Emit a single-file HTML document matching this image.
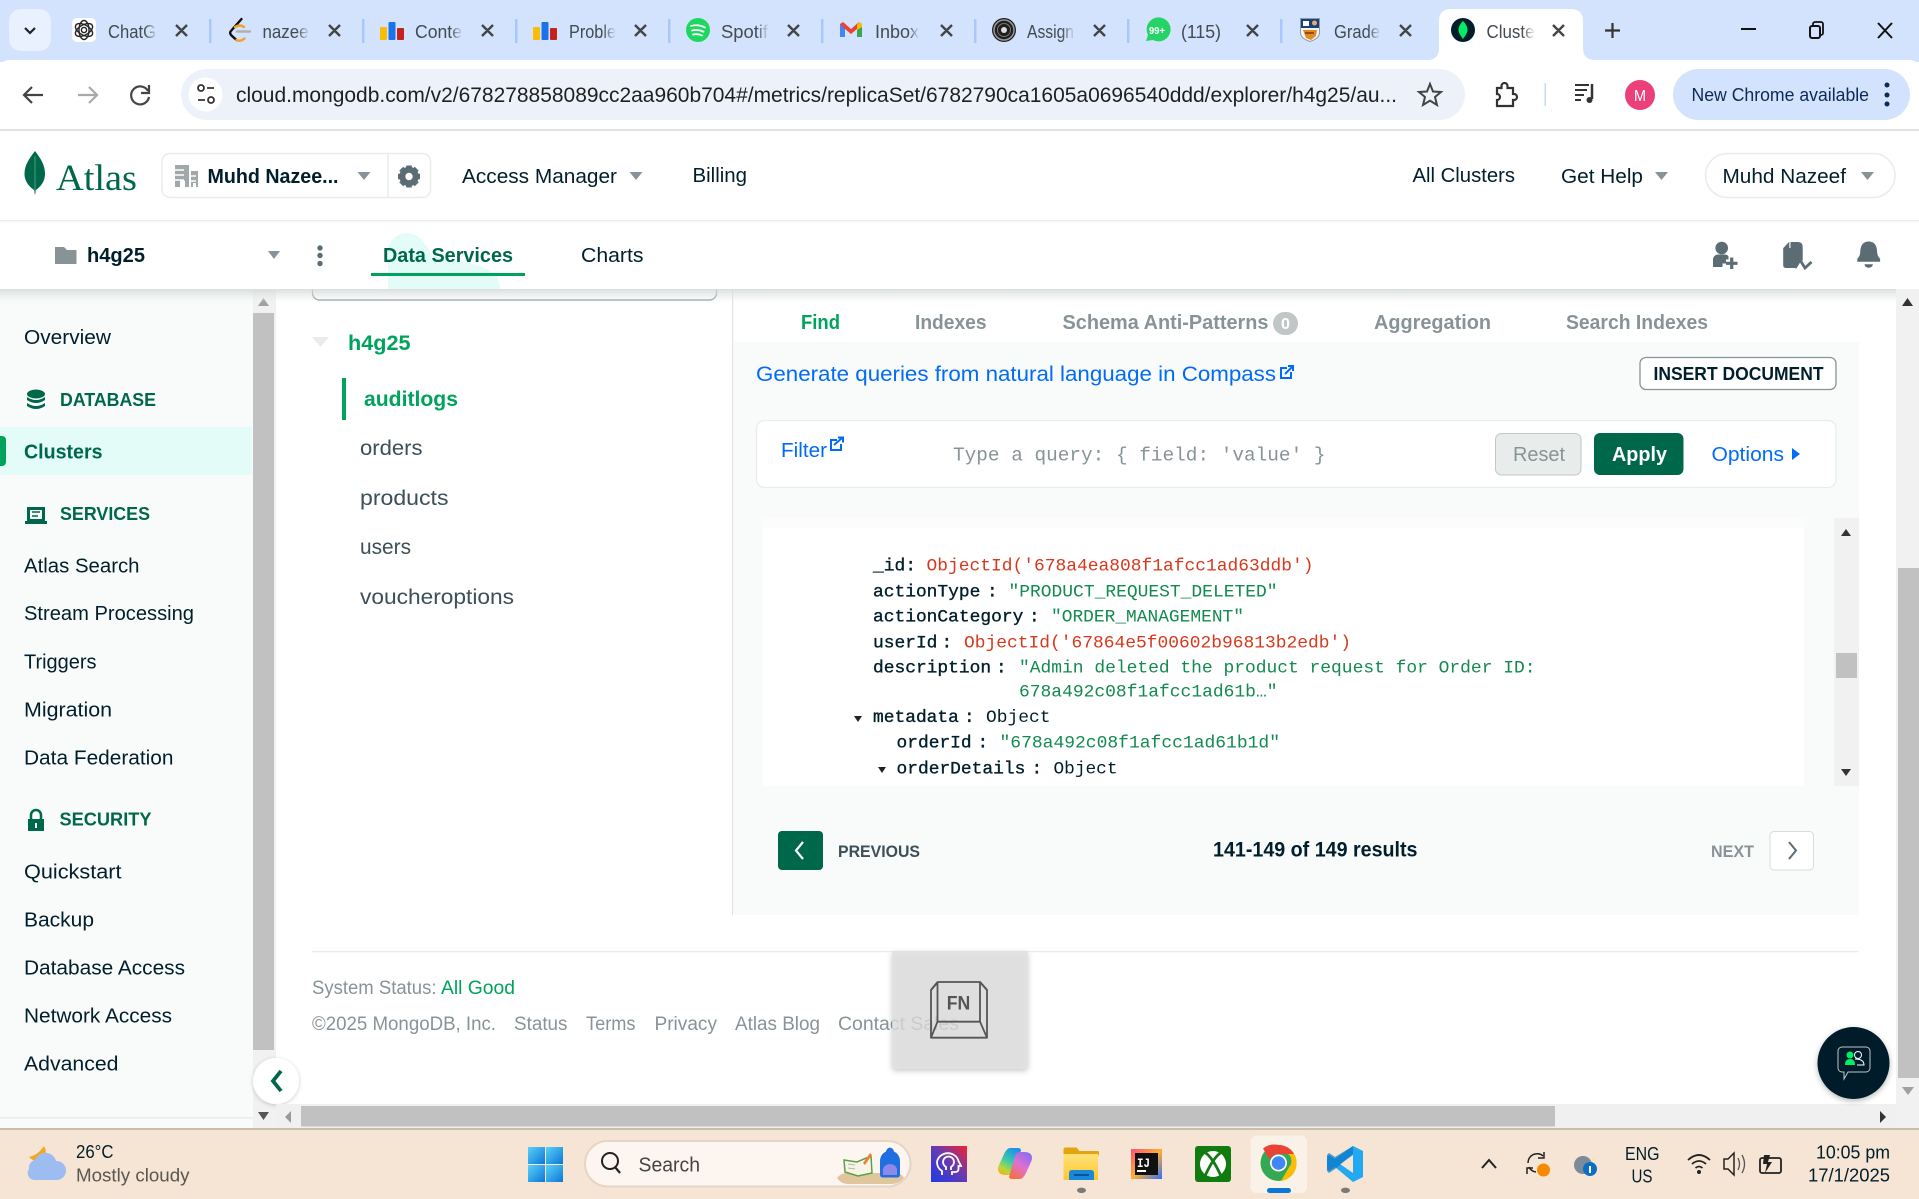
<!DOCTYPE html>
<html lang="en"><head><meta charset="utf-8"><title>Clusters | Cloud: MongoDB Cloud</title>
<style>
html,body{margin:0;padding:0;width:1919px;height:1199px;overflow:hidden;background:#fff}
svg{display:block}
text{font-family:"Liberation Sans",sans-serif;font-size:20px;fill:#001e2b;white-space:pre}
.tab{font-size:18px;fill:#444a50}
.b{font-weight:700}
.gr{fill:#889397}
.dg{fill:#00684a}
.lg{fill:#00a35c}
.bl{fill:#016bf8}
.sl{fill:#3d4f58}
.m{font-family:"Liberation Mono",monospace;font-size:17.9px}
.k{stroke:#001e2b;stroke-width:.35}
.r{fill:#d8381c}
.g{fill:#128a50}
</style></head><body>
<svg xmlns="http://www.w3.org/2000/svg" width="1919" height="1199" viewBox="0 0 1919 1199">
<defs>
<linearGradient id="fade"><stop offset="0" stop-color="#d3e3fd" stop-opacity="0"/><stop offset="1" stop-color="#d3e3fd"/></linearGradient>
<linearGradient id="fadew"><stop offset="0" stop-color="#fff" stop-opacity="0"/><stop offset="1" stop-color="#fff"/></linearGradient>
<linearGradient id="sh" x1="0" y1="0" x2="0" y2="1"><stop offset="0" stop-color="#d6dada" stop-opacity=".9"/><stop offset="1" stop-color="#e8edeb" stop-opacity="0"/></linearGradient>
<linearGradient id="pur" x1="0" y1="1" x2="1" y2="0"><stop offset="0" stop-color="#1c3be8"/><stop offset=".55" stop-color="#6a3ab0"/><stop offset="1" stop-color="#f8202c"/></linearGradient>
<linearGradient id="ij" x1="0" y1="0" x2="1" y2="1"><stop offset="0" stop-color="#ff4f7b"/><stop offset=".5" stop-color="#ffb02e"/><stop offset="1" stop-color="#2f6fff"/></linearGradient>
<linearGradient id="copl" x1=".7" y1="0" x2=".2" y2="1"><stop offset="0" stop-color="#1e8fe8"/><stop offset=".45" stop-color="#35c8b0"/><stop offset=".8" stop-color="#b8d838"/><stop offset="1" stop-color="#f0b020"/></linearGradient>
<linearGradient id="copr" x1=".8" y1="0" x2=".2" y2="1"><stop offset="0" stop-color="#8a6cf0"/><stop offset=".5" stop-color="#e070d0"/><stop offset="1" stop-color="#f5703a"/></linearGradient>
<linearGradient id="win" x1="0" y1="0" x2="1" y2="1"><stop offset="0" stop-color="#5cd0f8"/><stop offset="1" stop-color="#0a78d6"/></linearGradient>
<linearGradient id="fold" x1="0" y1="0" x2="0" y2="1"><stop offset="0" stop-color="#ffe27a"/><stop offset="1" stop-color="#fcc72e"/></linearGradient>
<filter id="ds" x="-30%" y="-30%" width="160%" height="160%"><feDropShadow dx="0" dy="2" stdDeviation="3" flood-color="#000" flood-opacity=".28"/></filter>
<filter id="ds2" x="-30%" y="-30%" width="160%" height="160%"><feDropShadow dx="0" dy="1" stdDeviation="2" flood-color="#000" flood-opacity=".2"/></filter>
</defs>

<!-- tab strip -->
<rect width="1919" height="62" fill="#d3e3fd"/>
<rect x="9" y="9" width="42" height="42" rx="12" fill="#e9f0fe"/>
<path d="M25 28l5 5 5-5" fill="none" stroke="#222" stroke-width="2.200"/>
<g fill="#a8c7fa"><rect x="209" y="19" width="2.500" height="24"/><rect x="362" y="19" width="2.500" height="24"/><rect x="515" y="19" width="2.500" height="24"/><rect x="668" y="19" width="2.500" height="24"/><rect x="821" y="19" width="2.500" height="24"/><rect x="974" y="19" width="2.500" height="24"/><rect x="1127" y="19" width="2.500" height="24"/><rect x="1280" y="19" width="2.500" height="24"/></g>
<path d="M1427 60Q1439 60 1439 48V21Q1439 9 1451 9H1571Q1583 9 1583 21V48Q1583 60 1595 60Z" fill="#fff"/>

<!-- favicons -->
<rect x="72" y="18" width="24" height="24" rx="5" fill="#fff"/>
<g fill="none" stroke="#222" stroke-width="1.400"><ellipse cx="84" cy="30" rx="9.500" ry="5" transform="rotate(30 84 30)"/><ellipse cx="84" cy="30" rx="9.500" ry="5" transform="rotate(90 84 30)"/><ellipse cx="84" cy="30" rx="9.500" ry="5" transform="rotate(150 84 30)"/><circle cx="84" cy="30" r="2.600"/></g>
<path d="M241.500 19L230.500 31.500q-1 2 1 4l5 4.500" fill="none" stroke="#111" stroke-width="2.400" stroke-linecap="round"/><path d="M236.500 40q4 2 8-1.500M235 27q5-3 9 0" fill="none" stroke="#f89f1b" stroke-width="2.400" stroke-linecap="round"/><path d="M237 31.500h13" stroke="#b0b0b0" stroke-width="2.400" stroke-linecap="round"/>
<g><rect x="380" y="27" width="7" height="13" rx="1" fill="#fbbc04"/><rect x="388.500" y="22" width="7" height="18" rx="1" fill="#1a73e8"/><rect x="397" y="28" width="7" height="12" rx="1" fill="#c5221f"/></g>
<g transform="translate(153 0)"><rect x="380" y="27" width="7" height="13" rx="1" fill="#fbbc04"/><rect x="388.500" y="22" width="7" height="18" rx="1" fill="#1a73e8"/><rect x="397" y="28" width="7" height="12" rx="1" fill="#c5221f"/></g>
<circle cx="698" cy="30" r="12" fill="#1ed760"/><path d="M691 26q7-2 14 1.500M692 30.500q6-1.500 11.500 1.200M693 34.500q5-1 9 1" fill="none" stroke="#fff" stroke-width="1.800" stroke-linecap="round"/>
<path d="M840 24v13h5V29l6 5 6-5v8h5V24l-3-2-8 7-8-7z" fill="#ea4335"/><path d="M840 24v13h5V29z" fill="#4285f4"/><path d="M857 29v8h5V24z" fill="#34a853"/><path d="M859 22l3 2v3l-5 3v-5z" fill="#fbbc04"/>
<circle cx="1004" cy="30" r="12" fill="#1f1f1f"/><circle cx="1004" cy="30" r="10" fill="none" stroke="#999" stroke-width="1.500"/><circle cx="1004" cy="30" r="6.500" fill="none" stroke="#777" stroke-width="1"/><circle cx="1004" cy="30" r="3" fill="#ddd"/>
<path d="M1146 41l2-6a12 12 0 1 1 5 5z" fill="#25d366"/><text x="1149" y="34" class="b" style="font-size:10px;fill:#fff" textLength="16" lengthAdjust="spacingAndGlyphs">99+</text>
<path d="M1300.500 18.500h19v14q0 6-9.500 9-9.500-3-9.500-9z" fill="#f6f6f6" stroke="#8a9bb0"/><rect x="1301" y="19" width="18" height="9" fill="#1c3f7a"/><rect x="1303" y="21" width="6" height="5" fill="#fff"/><circle cx="1314.500" cy="23" r="2.500" fill="#d9b070"/><path d="M1303 30h14l-1 6-5 4-5-2z" fill="#e08a20"/><path d="M1305 33h9" stroke="#7a3a10" stroke-width="1.500"/>
<circle cx="1463" cy="30" r="12" fill="#001e2b"/><path d="M1463 21c-3 3-4.500 6-4.500 9s2.500 6 4.500 9c2-3 4.500-6 4.500-9s-1.500-6-4.500-9z" fill="#00ed64"/>

<!-- tab titles -->
<text class="tab" x="108" y="38" textLength="48" lengthAdjust="spacingAndGlyphs">ChatG</text>
<text class="tab" x="262.500" y="38" textLength="46" lengthAdjust="spacingAndGlyphs">nazee</text>
<text class="tab" x="415" y="38" textLength="47" lengthAdjust="spacingAndGlyphs">Conte</text>
<text class="tab" x="569" y="38" textLength="47" lengthAdjust="spacingAndGlyphs">Proble</text>
<text class="tab" x="721" y="38" textLength="47" lengthAdjust="spacingAndGlyphs">Spotif</text>
<text class="tab" x="875" y="38" textLength="44" lengthAdjust="spacingAndGlyphs">Inbox</text>
<text class="tab" x="1027" y="38" textLength="47" lengthAdjust="spacingAndGlyphs">Assign</text>
<text class="tab" x="1181" y="38" textLength="40" lengthAdjust="spacingAndGlyphs">(115)</text>
<text class="tab" x="1334" y="38" textLength="46" lengthAdjust="spacingAndGlyphs">Grade</text>
<text class="tab" x="1486.500" y="38" textLength="48" lengthAdjust="spacingAndGlyphs">Cluste</text>
<g fill="url(#fade)"><rect x="144" y="18" width="14" height="26"/><rect x="297" y="18" width="13" height="26"/><rect x="450" y="18" width="13" height="26"/><rect x="603" y="18" width="13" height="26"/><rect x="756" y="18" width="13" height="26"/><rect x="909" y="18" width="10" height="26"/><rect x="1062" y="18" width="13" height="26"/><rect x="1368" y="18" width="13" height="26"/></g>
<rect x="1522" y="18" width="13" height="26" fill="url(#fadew)"/>
<path fill="none" stroke="#444" stroke-width="2.400" d="M176 25l11 11M187 25l-11 11M329 25l11 11M340 25l-11 11M482 25l11 11M493 25l-11 11M635 25l11 11M646 25l-11 11M788 25l11 11M799 25l-11 11M941 25l11 11M952 25l-11 11M1094 25l11 11M1105 25l-11 11M1247 25l11 11M1258 25l-11 11M1400 25l11 11M1411 25l-11 11M1553 25l11 11M1564 25l-11 11"/>
<path d="M1612.500 23v15M1605 30.500h15" stroke="#333" stroke-width="2.200"/>
<path d="M1741 29h15" stroke="#111" stroke-width="2"/>
<rect x="1810" y="26" width="10" height="12" rx="2" fill="none" stroke="#111" stroke-width="2"/><path d="M1813 26v-2a2 2 0 0 1 2-2h6a2 2 0 0 1 2 2v9a2 2 0 0 1-2 2" fill="none" stroke="#111" stroke-width="1.800"/>
<path d="M1878 23l14 15M1892 23l-14 15" stroke="#111" stroke-width="2"/>

<!-- toolbar -->
<path d="M0 129V70Q0 60 10 60H1909Q1919 60 1919 70V129Z" fill="#fff"/>
<rect y="129" width="1919" height="2" fill="#e3e3e3"/>
<path d="M43 95H25M32 87l-8 8 8 8" fill="none" stroke="#444" stroke-width="2.200"/>
<path d="M78 95h18M89 87l8 8-8 8" fill="none" stroke="#a9a9a9" stroke-width="2.200"/>
<path d="M148 91a9 9 0 1 0 1 6" fill="none" stroke="#444" stroke-width="2.200"/><path d="M149 85v8h-8" fill="none" stroke="#444" stroke-width="2.200"/>
<rect x="181" y="69" width="1284" height="51" rx="25.500" fill="#edf2fa"/>
<circle cx="205.500" cy="94.500" r="17" fill="#fff"/>
<circle cx="201" cy="88" r="3" fill="none" stroke="#333" stroke-width="1.800"/><path d="M207 88h7M198 100h7" stroke="#333" stroke-width="1.800"/><circle cx="211" cy="100" r="3" fill="none" stroke="#333" stroke-width="1.800"/>
<text x="236" y="102" style="font-size:21.500px;fill:#1f1f1f" textLength="1161" lengthAdjust="spacingAndGlyphs">cloud.mongodb.com/v2/678278858089cc2aa960b704#/metrics/replicaSet/6782790ca1605a0696540ddd/explorer/h4g25/au...</text>
<path d="M1430 84l3 7.500 8 .5-6 5 2 8-7-4.300-7 4.300 2-8-6-5 8-.5z" fill="none" stroke="#444" stroke-width="2"/>
<path d="M1497 88h4.500v-2a3 3 0 0 1 6 0v2h5.500v6h1a3 3 0 0 1 0 6h-1v6h-16v-6a3 3 0 0 0 0-6z" fill="none" stroke="#333" stroke-width="2.200"/>
<rect x="1544.500" y="83" width="1.500" height="23" fill="#c7d9f5"/>
<path d="M1575 85h14M1575 90h12M1575 95h9M1575 100h6" stroke="#333" stroke-width="2"/><path d="M1592 84v15" stroke="#333" stroke-width="2.500"/><circle cx="1589.500" cy="100" r="3" fill="#333"/>
<circle cx="1640" cy="95" r="15" fill="#ec407a"/><text x="1634" y="101" style="font-size:16px;fill:#fff" textLength="12" lengthAdjust="spacingAndGlyphs">M</text>
<rect x="1673" y="69" width="237" height="51" rx="25.500" fill="#d3e3fd"/>
<text x="1691.500" y="101" style="font-size:18px;fill:#0b2a55" textLength="177.500" lengthAdjust="spacingAndGlyphs">New Chrome available</text>
<g fill="#0b2a55"><circle cx="1887" cy="85" r="2.500"/><circle cx="1887" cy="95" r="2.500"/><circle cx="1887" cy="104" r="2.500"/></g>

<!-- Atlas header -->
<rect y="131" width="1919" height="158" fill="#fff"/>
<rect y="220" width="1919" height="1.500" fill="#e8edeb"/>
<path d="M35 151C29 159 24.500 165 24.500 174C24.500 182 30 187 34 190L35 195L36 190C40 187 45 182 45 174C45 165 41 159 35 151Z" fill="#00684a"/>
<path d="M35 156V192" stroke="#4f9a80" stroke-width="1"/>
<text x="56" y="190" style="font-family:'Liberation Serif',serif;font-size:37px;fill:#00684a" textLength="81" lengthAdjust="spacingAndGlyphs">Atlas</text>
<rect x="162" y="153.500" width="268.500" height="44" rx="8" fill="#fff" stroke="#e8edeb" stroke-width="1.500"/>
<path d="M388 154v43" stroke="#e8edeb" stroke-width="1.500"/>
<path d="M175 165h14v22h-4v-5a2.500 2.500 0 0 0-5 0v5h-5zM191 171h7v16h-2v-4h-3v4h-2z" fill="#a0a8aa"/><path d="M175 170h9M175 175h9M175 180h9M191 176h5M191 181h5" stroke="#fff" stroke-width="1.600"/>
<text class="b" x="207.500" y="183" textLength="131" lengthAdjust="spacingAndGlyphs">Muhd Nazee...</text>
<path d="M357.500 172h13l-6.500 8z" fill="#889397"/>
<g transform="translate(409 176.500)"><circle r="6.700" fill="none" stroke="#5c6c75" stroke-width="6"/><path d="M-2.800-11h5.600v5h-5.600zM-2.800 6h5.600v5h-5.600zM-11-2.800h5v5.600h-5zM6-2.800h5v5.600h-5z" fill="#5c6c75"/><path d="M-2.800-11h5.600v5h-5.600zM-2.800 6h5.600v5h-5.600zM-11-2.800h5v5.600h-5zM6-2.800h5v5.600h-5z" fill="#5c6c75" transform="rotate(45)"/></g>
<text x="462" y="183" textLength="155" lengthAdjust="spacingAndGlyphs">Access Manager</text>
<path d="M629.500 172h13l-6.500 8z" fill="#889397"/>
<text x="692.500" y="182" textLength="54.500" lengthAdjust="spacingAndGlyphs">Billing</text>
<text x="1412.500" y="182" textLength="102.500" lengthAdjust="spacingAndGlyphs">All Clusters</text>
<text x="1561" y="183" textLength="82" lengthAdjust="spacingAndGlyphs">Get Help</text>
<path d="M1655 172h13l-6.500 8z" fill="#889397"/>
<rect x="1705.500" y="153.500" width="189.500" height="44" rx="22" fill="#fff" stroke="#e8edeb" stroke-width="1.500"/>
<text x="1722.500" y="183" textLength="123.500" lengthAdjust="spacingAndGlyphs">Muhd Nazeef</text>
<path d="M1861 172h13l-6.500 8z" fill="#889397"/>

<!-- Project nav -->
<path d="M55 247h9l3 3h9.500v14H55z" fill="#889397"/>
<text class="b" x="87" y="262" textLength="58" lengthAdjust="spacingAndGlyphs">h4g25</text>
<path d="M268 251h12l-6 8z" fill="#889397"/>
<g fill="#5c6c75"><circle cx="320" cy="248" r="2.700"/><circle cx="320" cy="255.500" r="2.700"/><circle cx="320" cy="263.500" r="2.700"/></g>
<path d="M388 289V252C388 241 397 233 407 233S425 242 430 252C438 266 500 255 500 289Z" fill="#e3fcf7"/>
<text class="b dg" x="383" y="262" textLength="130" lengthAdjust="spacingAndGlyphs">Data Services</text>
<rect x="371" y="273" width="154" height="3" fill="#00a35c"/>
<text x="581" y="262" textLength="62.500" lengthAdjust="spacingAndGlyphs">Charts</text>
<!-- add user -->
<g fill="#5c6c75"><circle cx="1721.700" cy="248" r="6.300"/><path d="M1713 267v-7q0-5 5-5.500h7.500q2.500.5 3 2v3h-2.500v4h-3.500v3.500z"/></g>
<path d="M1731.700 257.500v11.500M1726 263.300h11.500" stroke="#5c6c75" stroke-width="3.200"/>
<!-- activity doc -->
<path d="M1790.500 242h7.500q4.700 0 4.700 5v14l-3-3-4 9-1 1h-9a2.500 2.500 0 0 1-2.500-2.500v-17.500h7.300z" fill="#5c6c75"/>
<path d="M1783.300 248l6-6.300v6.300z" fill="#5c6c75"/>
<path d="M1795 268l5-8 5 8 6.500-6" fill="none" stroke="#5c6c75" stroke-width="2.800"/>
<!-- bell -->
<path d="M1868.700 241.500c-6 0-8.200 4.500-8.400 10-.1 4-1.600 6-3 7.200v3h22.800v-3c-1.400-1.200-2.900-3.200-3-7.200-.2-5.500-2.400-10-8.400-10z" fill="#5c6c75"/><path d="M1864.500 264.300h8.400a4.200 3.500 0 0 1-8.400 0z" fill="#5c6c75"/>

<!-- sidebar -->
<rect y="289" width="253" height="839" fill="#f9fbfa"/>
<rect y="1117" width="253" height="1.500" fill="#e8edeb"/>
<rect x="253" y="289" width="23" height="839" fill="#f1f1f1"/>
<rect x="253" y="313" width="21" height="737" fill="#c1c1c1"/>
<path d="M258 306h11l-5.500-8z" fill="#a0a0a0"/><path d="M258 1112h11l-5.500 8z" fill="#555"/>
<text x="24" y="344" textLength="87" lengthAdjust="spacingAndGlyphs">Overview</text>
<g fill="#00684a"><ellipse cx="36" cy="394" rx="9" ry="4.500"/><path d="M27 397q9 6 18 0v3q-9 6-18 0zM27 403q9 6 18 0v3q-9 6-18 0z"/></g>
<text class="dg b" x="60" y="406" style="font-size:18px" textLength="96" lengthAdjust="spacingAndGlyphs">DATABASE</text>
<rect y="427" width="252" height="48" fill="#e3fcf7"/>
<path d="M0 436h2a4 4 0 0 1 4 4v22a4 4 0 0 1-4 4H0z" fill="#00a35c"/>
<text class="b dg" x="24" y="458.500" textLength="78.500" lengthAdjust="spacingAndGlyphs">Clusters</text>
<path d="M27 507h18v14h2v3H25v-3h2zM30 510v9h12v-9z" fill="#00684a"/><path d="M32 512h8M32 516h6" stroke="#00684a" stroke-width="1.500"/>
<text class="b dg" x="60" y="520" style="font-size:18px" textLength="90" lengthAdjust="spacingAndGlyphs">SERVICES</text>
<text x="24" y="572.500" textLength="115.500" lengthAdjust="spacingAndGlyphs">Atlas Search</text>
<text x="24" y="620" textLength="170" lengthAdjust="spacingAndGlyphs">Stream Processing</text>
<text x="24" y="668.500" textLength="72.500" lengthAdjust="spacingAndGlyphs">Triggers</text>
<text x="24" y="716.500" textLength="88" lengthAdjust="spacingAndGlyphs">Migration</text>
<text x="24" y="764.500" textLength="149.500" lengthAdjust="spacingAndGlyphs">Data Federation</text>
<path d="M28 819h16v12H28z" fill="#00684a"/><path d="M31 819v-4a5 5 0 0 1 10 0v4" fill="none" stroke="#00684a" stroke-width="2.500"/><rect x="35" y="823" width="2" height="5" fill="#fff"/>
<text class="b dg" x="59.500" y="825.500" style="font-size:18px" textLength="92" lengthAdjust="spacingAndGlyphs">SECURITY</text>
<text x="24" y="878.500" textLength="97.500" lengthAdjust="spacingAndGlyphs">Quickstart</text>
<text x="24" y="926.500" textLength="70" lengthAdjust="spacingAndGlyphs">Backup</text>
<text x="24" y="974.500" textLength="161" lengthAdjust="spacingAndGlyphs">Database Access</text>
<text x="24" y="1022.500" textLength="148" lengthAdjust="spacingAndGlyphs">Network Access</text>
<text x="24" y="1070.500" textLength="94.500" lengthAdjust="spacingAndGlyphs">Advanced</text>

<!-- tree panel -->
<path d="M312.500 289v4a7 7 0 0 0 7 7h390a7 7 0 0 0 7-7v-4" fill="#fff" stroke="#889397" stroke-width="1.300"/>
<path d="M312 337h17l-8.500 10z" fill="#e8edeb"/>
<text class="b lg" x="348" y="350" style="font-size:21px" textLength="62.500" lengthAdjust="spacingAndGlyphs">h4g25</text>
<rect x="342" y="378" width="4" height="42" fill="#00a35c"/>
<text class="b lg" x="364" y="406" style="font-size:21px" textLength="94" lengthAdjust="spacingAndGlyphs">auditlogs</text>
<text class="sl" x="360" y="455" style="font-size:21px" textLength="62.500" lengthAdjust="spacingAndGlyphs">orders</text>
<text class="sl" x="360" y="505" style="font-size:21px" textLength="88.500" lengthAdjust="spacingAndGlyphs">products</text>
<text class="sl" x="360" y="554" style="font-size:21px" textLength="51" lengthAdjust="spacingAndGlyphs">users</text>
<text class="sl" x="360" y="604" style="font-size:21px" textLength="154" lengthAdjust="spacingAndGlyphs">voucheroptions</text>
<rect x="732" y="289" width="1.200" height="626" fill="#dfe3e2"/>

<!-- right panel -->
<rect x="733" y="342" width="1126" height="573" fill="#f9fbfa"/>
<text class="b lg" x="801" y="329" textLength="39" lengthAdjust="spacingAndGlyphs">Find</text>
<text class="b gr" x="915" y="329" textLength="71.500" lengthAdjust="spacingAndGlyphs">Indexes</text>
<text class="b gr" x="1062.500" y="329" textLength="206" lengthAdjust="spacingAndGlyphs">Schema Anti-Patterns</text>
<rect x="1273" y="312" width="25" height="23" rx="11.500" fill="#c1c7c6"/><text class="b" x="1281" y="329" style="font-size:16px;fill:#fff" textLength="9" lengthAdjust="spacingAndGlyphs">0</text>
<text class="b gr" x="1374" y="329" textLength="117" lengthAdjust="spacingAndGlyphs">Aggregation</text>
<text class="b gr" x="1566" y="329" textLength="142" lengthAdjust="spacingAndGlyphs">Search Indexes</text>
<text class="bl" x="756" y="381" style="font-size:21px" textLength="520" lengthAdjust="spacingAndGlyphs">Generate queries from natural language in Compass</text>
<path d="M1287 368h-6v10h10v-6M1285 374l7-7M1288 366h5v5" fill="none" stroke="#016bf8" stroke-width="2"/>
<rect x="1640" y="357.500" width="196" height="32" rx="6" fill="#fff" stroke="#889397" stroke-width="1.300"/>
<text class="b" x="1653.500" y="380" style="font-size:18px" textLength="170" lengthAdjust="spacingAndGlyphs">INSERT DOCUMENT</text>
<rect x="756.500" y="420.500" width="1079.500" height="67" rx="8" fill="#fff" stroke="#e8edeb" stroke-width="1.300"/>
<text class="bl" x="781" y="457" textLength="46" lengthAdjust="spacingAndGlyphs">Filter</text>
<path d="M837 440h-6v10h10v-6M834 445l8-7M838 437.500h5v5" fill="none" stroke="#016bf8" stroke-width="2"/>
<text class="m gr" x="953" y="460.500" style="font-size:19.400px" textLength="372.500" lengthAdjust="spacingAndGlyphs">Type a query: { field: 'value' }</text>
<rect x="1495.500" y="433.500" width="85.500" height="41.500" rx="6" fill="#e8edeb" stroke="#c1c7c6"/>
<text class="gr" x="1513" y="461" textLength="52" lengthAdjust="spacingAndGlyphs">Reset</text>
<rect x="1594" y="433" width="89.500" height="42" rx="6" fill="#00684a"/>
<text class="b" x="1612" y="461" style="fill:#fff" textLength="55" lengthAdjust="spacingAndGlyphs">Apply</text>
<text class="bl" x="1711.500" y="461" textLength="72.500" lengthAdjust="spacingAndGlyphs">Options</text>
<path d="M1792 448l8 6-8 6z" fill="#016bf8"/>

<!-- documents -->
<rect x="763" y="518" width="1041" height="10" fill="#fbfcfb"/>
<rect x="763" y="528" width="1041" height="258" fill="#fff"/>
<rect x="1834" y="518" width="25" height="268" fill="#f1f1f1"/>
<path d="M1841 536h10l-5-7z" fill="#333"/><path d="M1841 769h10l-5 7z" fill="#333"/>
<rect x="1836" y="653" width="21" height="25" fill="#c1c1c1"/>
<text class="m k" x="873" y="570.500">_id:</text><text class="m r" x="926.500" y="570.500" textLength="387" lengthAdjust="spacingAndGlyphs">ObjectId('678a4ea808f1afcc1ad63ddb')</text>
<text class="m k" x="873" y="596.500">actionType</text><text class="m k" x="987" y="596.500">:</text><text class="m g" x="1008.500" y="596.500" textLength="269" lengthAdjust="spacingAndGlyphs">"PRODUCT_REQUEST_DELETED"</text>
<text class="m k" x="873" y="621.500">actionCategory</text><text class="m k" x="1029" y="621.500">:</text><text class="m g" x="1051" y="621.500" textLength="193" lengthAdjust="spacingAndGlyphs">"ORDER_MANAGEMENT"</text>
<text class="m k" x="873" y="647.500">userId</text><text class="m k" x="941.500" y="647.500">:</text><text class="m r" x="964" y="647.500" textLength="387" lengthAdjust="spacingAndGlyphs">ObjectId('67864e5f00602b96813b2edb')</text>
<text class="m k" x="873" y="672.500">description</text><text class="m k" x="996" y="672.500">:</text><text class="m g" x="1019" y="672.500" textLength="516.500" lengthAdjust="spacingAndGlyphs">"Admin deleted the product request for Order ID:</text>
<text class="m g" x="1019" y="696.500" textLength="258.500" lengthAdjust="spacingAndGlyphs">678a492c08f1afcc1ad61b…"</text>
<path d="M854 716h8l-4 6z" fill="#222"/>
<text class="m k" x="873" y="722">metadata</text><text class="m k" x="964" y="722">:</text><text class="m" x="986" y="722" textLength="64.500" lengthAdjust="spacingAndGlyphs">Object</text>
<text class="m k" x="896.500" y="747.500">orderId</text><text class="m k" x="977.500" y="747.500">:</text><text class="m g" x="999.500" y="747.500" textLength="280.500" lengthAdjust="spacingAndGlyphs">"678a492c08f1afcc1ad61b1d"</text>
<path d="M878 767h8l-4 6z" fill="#222"/>
<text class="m k" x="896.500" y="773.500">orderDetails</text><text class="m k" x="1031.500" y="773.500">:</text><text class="m" x="1053.500" y="773.500" textLength="64" lengthAdjust="spacingAndGlyphs">Object</text>

<!-- pagination -->
<rect x="778" y="831" width="45" height="39" rx="4" fill="#00684a"/><path d="M803 842l-7 8.500 7 8.500" fill="none" stroke="#fff" stroke-width="2.200"/>
<text class="b sl" x="838" y="857" style="font-size:17px" textLength="82" lengthAdjust="spacingAndGlyphs">PREVIOUS</text>
<text class="b" x="1213" y="856.500" style="font-size:21px" textLength="204.500" lengthAdjust="spacingAndGlyphs">141-149 of 149 results</text>
<text class="b gr" x="1711" y="857" style="font-size:17px" textLength="43" lengthAdjust="spacingAndGlyphs">NEXT</text>
<rect x="1770" y="831.500" width="43.500" height="38.500" rx="4" fill="#fff" stroke="#d8dcdc"/><path d="M1789 842l7 8.500-7 8.500" fill="none" stroke="#5c6c75" stroke-width="2"/>

<!-- footer -->
<rect x="312" y="951" width="1546.500" height="1.300" fill="#e8edeb"/>
<text class="gr" x="312" y="994" style="font-size:19px" textLength="124.500" lengthAdjust="spacingAndGlyphs">System Status:</text>
<text class="lg" x="441" y="994" style="font-size:19px" textLength="74" lengthAdjust="spacingAndGlyphs">All Good</text>
<text class="gr" x="312" y="1030" style="font-size:19px" textLength="184" lengthAdjust="spacingAndGlyphs">©2025 MongoDB, Inc.</text>
<text class="gr" x="514" y="1030" style="font-size:19px" textLength="53.500" lengthAdjust="spacingAndGlyphs">Status</text>
<text class="gr" x="586" y="1030" style="font-size:19px" textLength="49.500" lengthAdjust="spacingAndGlyphs">Terms</text>
<text class="gr" x="654.500" y="1030" style="font-size:19px" textLength="62.500" lengthAdjust="spacingAndGlyphs">Privacy</text>
<text class="gr" x="735" y="1030" style="font-size:19px" textLength="85" lengthAdjust="spacingAndGlyphs">Atlas Blog</text>
<text class="gr" x="838" y="1030" style="font-size:19px" textLength="121" lengthAdjust="spacingAndGlyphs">Contact Sales</text>

<!-- FN overlay (semi-transparent toast) -->
<rect x="892" y="951" width="136" height="118" rx="3" fill="#dedede" fill-opacity=".76" filter="url(#ds)"/>
<g fill="none" stroke="#555" stroke-width="1.800" stroke-linejoin="round">
<path d="M931 1037.700V990l7-8h42l7 8v47.700z"/>
<path d="M937.500 982v39.700h42.500V982M937.500 1021.700L931 1037.700M980 1021.700L987 1037.700M931 990l6.500-8M987 990l-7-8"/>
</g>
<text class="b" x="946.700" y="1009.500" style="font-size:19px;fill:#555" textLength="23.500" lengthAdjust="spacingAndGlyphs">FN</text>

<!-- nav shadow -->
<rect x="0" y="289" width="1896" height="14" fill="url(#sh)"/>

<!-- collapse button -->
<circle cx="276" cy="1081" r="23" fill="#fff" filter="url(#ds2)"/><path d="M281 1071l-8 10 8 10" fill="none" stroke="#00684a" stroke-width="3.800"/>

<!-- page scrollbars -->
<rect x="276" y="1104" width="1620" height="24" fill="#f0f0f0"/>
<rect x="301" y="1106" width="1254" height="20.500" fill="#c1c1c1"/>
<path d="M291 1111v12l-6-6z" fill="#999"/><path d="M1880 1111v12l6-6z" fill="#333"/>
<rect x="1896" y="289" width="23" height="839" fill="#f1f1f1"/>
<rect x="1898" y="568" width="21" height="510" fill="#c1c1c1"/>
<path d="M1902 306h11l-5.500-8z" fill="#333"/><path d="M1902 1087h12l-6 8z" fill="#a0a0a0"/>

<!-- chat -->
<circle cx="1853.500" cy="1063" r="36" fill="#001e2b" filter="url(#ds)"/>
<path d="M1842 1047h24a4 4 0 0 1 4 4v17a4 4 0 0 1-4 4h-18l-4 7v-7h-2a4 4 0 0 1-4-4v-17a4 4 0 0 1 4-4z" fill="none" stroke="#c1c7c6" stroke-width="1"/>
<circle cx="1850" cy="1055" r="3.500" fill="#00ed64"/><path d="M1845 1065q0-6 5-6t5 6z" fill="#00ed64"/>
<circle cx="1858" cy="1055" r="3.500" fill="none" stroke="#fff"/><path d="M1855 1059q9 0 9 6h-7" fill="none" stroke="#fff"/>

<!-- taskbar -->
<rect y="1128" width="1919" height="71" fill="#f6e4d4"/>
<rect y="1128" width="1919" height="2" fill="#c9bdb2"/>
<path d="M44 1146q-6 9-15 11 7 7 14 2 5-6 1-13z" fill="#f4a623"/>
<path d="M35 1180a7 7 0 0 1-6-11 8 8 0 0 1 6-9 11 11 0 0 1 21 1 9.500 9.500 0 0 1 1 19z" fill="#9dbcf2"/>
<text x="76" y="1158" style="font-size:18px" textLength="37.500" lengthAdjust="spacingAndGlyphs">26°C</text>
<text x="76" y="1181.500" style="font-size:18px;fill:#5a5650" textLength="113.500" lengthAdjust="spacingAndGlyphs">Mostly cloudy</text>
<g fill="url(#win)"><rect x="528" y="1147" width="17" height="17"/><rect x="546" y="1147" width="17" height="17"/><rect x="528" y="1165" width="17" height="17"/><rect x="546" y="1165" width="17" height="17"/></g>
<rect x="585" y="1141" width="325.500" height="45.500" rx="22.700" fill="#fdf6f0" stroke="#e6d4c6" stroke-width="2"/>
<circle cx="610" cy="1161" r="8" fill="none" stroke="#222" stroke-width="2"/><path d="M615 1167l5 6" stroke="#222" stroke-width="2.200"/>
<text x="638.500" y="1171.500" style="font-size:20px;fill:#444" textLength="61.500" lengthAdjust="spacingAndGlyphs">Search</text>
<!-- search decor -->
<path d="M837 1178q4-5 9-5h50q5 0 8 5-5 6-12 6h-44q-7 0-11-6z" fill="#dfc69c"/>
<path d="M844 1160l13 2 14-6 1 17-14 3-13-4z" fill="#f6f4e6" stroke="#5e9e4a" stroke-width="1.500"/>
<path d="M848 1164l7 1M848 1168l7 1" stroke="#b8b8a8"/>
<path d="M863 1163l7-10 2 2-7 10z" fill="#f08030"/>
<path d="M890 1147.500a5 5 0 0 1 4 4q6 3 6 10v13q0 3-3 3h-14q-3 0-3-3v-13q0-7 6-10a5 5 0 0 1 4-4z" fill="#1f6fe0"/>
<path d="M883 1170a7 6 0 0 1 14 0v5h-14z" fill="#8e88e8"/>
<!-- purple app -->
<rect x="931" y="1146" width="36" height="36" fill="url(#pur)"/>
<path d="M942 1175v-4q-5-3-5-9a11 10.500 0 0 1 21.500-1l2.500 5h-2.500v3q0 3-3.500 3h-3v3" fill="none" stroke="#fff" stroke-width="1.800"/>
<path d="M946 1170v-3q-3-2-3-5a5.500 5.500 0 0 1 11 0q0 3-3 5v3" fill="none" stroke="#fff" stroke-width="1.800"/>
<!-- copilot -->
<path d="M1010 1148h8q2.500 0 3 2l-6 21q-1 4-5 4h-4q-8 0-8-6 0-2 1-4l5-11q3-6 6-6z" fill="url(#copl)"/>
<path d="M1020 1179h-8q-2.500 0-3-2l6-21q1-4 5-4h4q8 0 8 6 0 2-1 4l-5 11q-3 6-6 6z" fill="url(#copr)"/>
<!-- folder -->
<path d="M1063.500 1150a2 2 0 0 1 2-2.500h11l3 3.500h18.500q1 0 1 1.500v3h-35.500z" fill="#e3a40e"/>
<rect x="1063.500" y="1154" width="34.500" height="26" fill="url(#fold)"/>
<path d="M1069 1180v-7q0-3 3-3h19q3 0 3 3v7z" fill="#1a88d8"/><path d="M1074 1175h15" stroke="#0a4f90" stroke-width="1.800"/>
<ellipse cx="1081.500" cy="1190.300" rx="4.500" ry="2.700" fill="#7a7a7a"/>
<rect x="1131" y="1149" width="31" height="30" fill="url(#ij)"/><rect x="1135" y="1153" width="23" height="22" fill="#111"/>
<text class="b" x="1137" y="1167" style="font-family:'Liberation Mono',monospace;font-size:13px;fill:#fff" textLength="13" lengthAdjust="spacingAndGlyphs">IJ</text><rect x="1137" y="1170" width="9" height="2" fill="#fff"/>
<rect x="1195" y="1146" width="36" height="36" rx="3" fill="#107c10"/><circle cx="1213" cy="1164" r="13" fill="#fff"/><path d="M1204 1152q8 4 17 24M1222 1152q-8 4-17 24" stroke="#107c10" stroke-width="2.800" fill="none"/>
<rect x="1250.500" y="1135.500" width="56.500" height="57.500" rx="6" fill="#faf1e9"/>
<circle cx="1278.500" cy="1163" r="18" fill="#34a853"/><path d="M1278.500 1145a18 18 0 0 1 15.600 9h-15.600a9 9 0 0 0-8.500 6l-7-11.500a18 18 0 0 1 15.500-3.500z" fill="#ea4335"/><path d="M1294.100 1154a18 18 0 0 1-13 27l8-14a9 9 0 0 0-1-13z" fill="#fbbc04"/><circle cx="1278.500" cy="1163" r="8.500" fill="#fff"/><circle cx="1278.500" cy="1163" r="6.800" fill="#4285f4"/>
<rect x="1267" y="1188" width="24" height="5" rx="2.500" fill="#0a78d6"/>
<path d="M1353 1146l10 5v26l-10 5-18-15-6 4-2-2v-12l2-2 6 4z" fill="#23a8f2"/><path d="M1353 1155v18l-13-9z" fill="#f6e4d4"/><path d="M1335 1157l-6-4-2 2v16l2 2 6-4 18-15v-8z" fill="#0b76c4" opacity=".7"/>
<ellipse cx="1345.500" cy="1190.300" rx="4.500" ry="2.700" fill="#7a7a7a"/>
<path d="M1482 1168l7-8 7 8" fill="none" stroke="#222" stroke-width="2"/>
<path d="M1528 1163a9 9 0 0 1 15-7M1529 1167a9 9 0 0 0 7 5" fill="none" stroke="#222" stroke-width="1.500"/><path d="M1544 1152v6h-6M1527 1174v-6h6" fill="none" stroke="#222" stroke-width="1.500"/>
<circle cx="1543.500" cy="1170" r="6.500" fill="#f58a00"/>
<circle cx="1583" cy="1165" r="9" fill="#7c8b97"/><circle cx="1590" cy="1169" r="7" fill="#0a6fc4"/><rect x="1589" y="1166" width="2" height="7" fill="#fff"/>
<text x="1625" y="1160" style="font-size:18px" textLength="34.500" lengthAdjust="spacingAndGlyphs">ENG</text>
<text x="1631.500" y="1182.500" style="font-size:18px" textLength="21" lengthAdjust="spacingAndGlyphs">US</text>
<path d="M1688 1160q11-10 22 0M1692 1164q7-6 14 0M1695.500 1168q3.500-3 7 0" fill="none" stroke="#222" stroke-width="1.800"/><circle cx="1699" cy="1172" r="2" fill="#222"/>
<path d="M1724 1159h4l6-6v22l-6-6h-4z" fill="none" stroke="#222" stroke-width="1.500"/><path d="M1738 1158q3 6 0 12M1742 1155q5 9 0 18" fill="none" stroke="#555" stroke-width="1.300"/>
<rect x="1760" y="1158" width="21" height="15" rx="2" fill="none" stroke="#222" stroke-width="1.800"/><path d="M1764 1155l-1 9h4l-2 9 7-11h-4l2-7z" fill="#222"/>
<text x="1816" y="1158.500" style="font-size:18px" textLength="74" lengthAdjust="spacingAndGlyphs">10:05 pm</text>
<text x="1808" y="1181.500" style="font-size:18px" textLength="82" lengthAdjust="spacingAndGlyphs">17/1/2025</text>
</svg>
</body></html>
